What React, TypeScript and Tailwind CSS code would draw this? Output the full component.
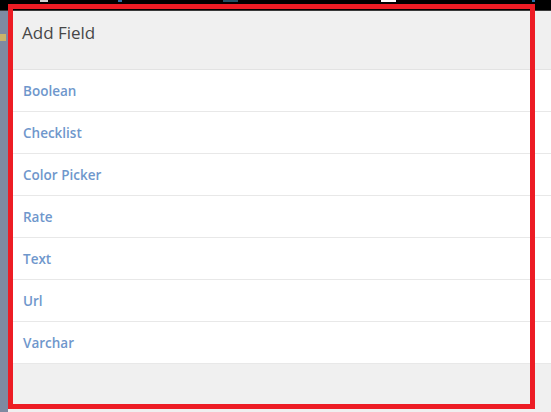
import React from "react";

const items = ["Boolean", "Checklist", "Color Picker", "Rate", "Text", "Url", "Varchar"];

export default function App() {
  return (
    <div
      className="relative w-[551px] h-[412px] overflow-hidden bg-[#f0f0f0] flex flex-col"
      style={{ fontFamily: '"Open Sans", "Noto Sans", sans-serif' }}
    >
      <div className="h-[10px] bg-black shrink-0 flex items-start">
        <div className="ml-[40px] w-[8px] h-[2px] bg-[#cfcfcf]" />
        <div className="ml-[70px] w-[4px] h-[2px] bg-[#2a6fa8]" />
        <div className="ml-[101px] w-[15px] h-[2px] bg-[#1f4f63]" />
        <div className="ml-[143px] w-[15px] h-[2px] bg-white" />
        <div className="ml-[136px] w-[3px] h-[2px] bg-[#2a6fa8]" />
      </div>
      <div className="h-[1px] bg-[#3a3a3a] shrink-0" />
      <div className="flex flex-1 min-h-0">
        <div className="w-[8px] shrink-0 bg-[#7e8aa1] flex flex-col">
          <div className="mt-[23px] w-[6px] h-[7px] bg-[#c9b46a]" />
        </div>
        <div className="flex-1 flex flex-col bg-[#f0f0f0]">
          <div className="h-[59px] border-b border-[#e3e3e3] pl-[14px] pt-[10px]">
            <div className="text-[17px] leading-[24px] text-[#474747]">Add Field</div>
          </div>
          <div className="bg-white">
            {items.map((it) => (
              <div
                key={it}
                className="h-[42px] border-b border-[#e8e8e8] pl-[15px] pt-[2px] flex items-center text-[13.5px] font-semibold text-[#6f97cc]"
              >
                {it}
              </div>
            ))}
          </div>
          <div className="flex-1 bg-[#f0f0f0]" />
        </div>
      </div>
      <div className="absolute left-[8px] top-[4px] w-[527px] h-[405px] border-[5px] border-[#ed1c24] pointer-events-none" />
    </div>
  );
}
